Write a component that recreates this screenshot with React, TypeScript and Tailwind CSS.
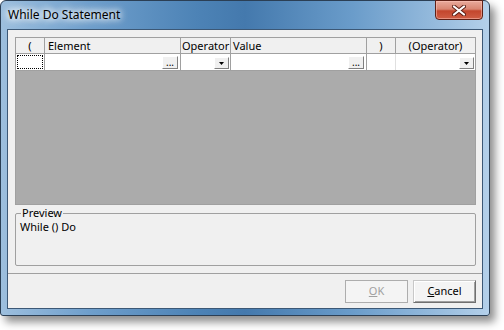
import React from "react";

const F = { fontFamily: '"Segoe UI", "Noto Sans", sans-serif' };

function DotsBtn() {
  return (
    <div className="absolute right-[2px] top-[2px] w-[16px] h-[13px] bg-[#f0f0f0] border border-[#808080] border-t-white border-l-white flex items-end justify-center text-[10px] leading-[10px] text-black pb-[1px]">
      ...
    </div>
  );
}

function DropBtn() {
  return (
    <div className="absolute right-[1px] top-[3px] w-[15px] h-[12px] bg-[#f0f0f0] border border-[#808080] border-t-white border-l-white flex items-center justify-center">
      <svg width="5" height="3" viewBox="0 0 5 3">
        <path d="M0 0h5L2.5 3z" fill="#000" />
      </svg>
    </div>
  );
}

export default function App() {
  const cols = "grid-cols-[29px_136px_50px_136px_29px_79px]";
  return (
    <div className="w-[504px] h-[330px] bg-white" style={F}>
      <div className="w-[490px] h-[316px] flex flex-col rounded-t-[6px] rounded-b-[3px] border border-[#2b3f55] shadow-[5px_6px_9px_rgba(0,0,0,0.45)] bg-[linear-gradient(90deg,#9dbfde_0%,#6f9fcc_18%,#4d83b6_40%,#4479ad_50%,#6a9cca_72%,#9dc0e0_92%,#b4d0ea_100%)]">
        <div className="h-[28px] flex items-start justify-between pl-[7px] pr-[6px] shrink-0">
          <div className="mt-[6px] text-[12px] leading-[16px] text-black [text-shadow:0_0_6px_#fff,0_0_8px_#fff,0_0_10px_#fff]">
            While Do Statement
          </div>
          <div className="-mt-[1px] w-[48px] h-[20px] rounded-b-[4px] border border-[#5f2016] bg-[linear-gradient(180deg,#e9aa9c_0%,#d98672_45%,#c3462d_55%,#cf5e45_100%)] flex items-center justify-center shadow-[inset_0_0_0_1px_rgba(255,200,190,0.5)]">
            <svg width="14" height="11" viewBox="0 0 14 11">
              <path d="M2 1.5L12 9.5M12 1.5L2 9.5" stroke="#5a1d14" strokeWidth="4" strokeLinecap="round" />
              <path d="M2 1.5L12 9.5M12 1.5L2 9.5" stroke="#fff" strokeWidth="2.2" strokeLinecap="round" />
            </svg>
          </div>
        </div>
        <div className="flex-1 mx-[6px] mb-[6px] border border-[#3c5876] bg-[#f0f0f0] flex flex-col">
          <div className="pt-[7px] pl-[7px] pr-[6px]">
            <div className="h-[168px] border border-[#a0a0a0] bg-[#ababab] flex flex-col text-[11px] leading-[15px] text-black">
              <div className={`grid ${cols} h-[16px] bg-[#f0f0f0] border-b border-[#a0a0a0]`}>
                <div className="border-r border-[#a0a0a0] text-center">(</div>
                <div className="border-r border-[#a0a0a0] pl-[3px]">Element</div>
                <div className="border-r border-[#a0a0a0] pl-[1px]">Operator</div>
                <div className="border-r border-[#a0a0a0] pl-[2px]">Value</div>
                <div className="border-r border-[#a0a0a0] text-center">)</div>
                <div className="text-center">(Operator)</div>
              </div>
              <div className={`grid ${cols} h-[17px] bg-white border-b border-[#a0a0a0]`}>
                <div className="border-r border-[#a0a0a0] p-[1px]">
                  <div className="w-full h-full border border-dotted border-black" />
                </div>
                <div className="border-r border-[#a0a0a0] relative">
                  <DotsBtn />
                </div>
                <div className="border-r border-[#a0a0a0] relative">
                  <DropBtn />
                </div>
                <div className="border-r border-[#a0a0a0] relative">
                  <DotsBtn />
                </div>
                <div className="border-r border-[#e0e0e0]" />
                <div className="relative">
                  <DropBtn />
                </div>
              </div>
            </div>
          </div>
          <div className="pl-[7px] pr-[6px] mt-[2px]">
            <fieldset className="h-[59px] border border-[#a0a0a0] px-[4px] rounded-[2px]">
              <legend className="text-[11px] leading-[12px] px-[1px] ml-[1px] text-black">Preview</legend>
              <div className="text-[11px] leading-[13px] mt-[1px] text-black">While () Do</div>
            </fieldset>
          </div>
          <div className="mt-[7px] border-t border-[#a0a0a0]" />
          <div className="flex justify-end gap-[5px] pr-[6px] pt-[6px]">
            <div className="w-[63px] h-[23px] border border-[#adadad] bg-[#f4f4f4] flex items-center justify-center text-[11px] text-[#a0a0a0]">
              <span><span className="underline">O</span>K</span>
            </div>
            <div className="w-[63px] h-[23px] border border-[#707070] border-t-[#c8c8c8] border-l-[#c8c8c8] bg-[#f4f4f4] shadow-[inset_1px_1px_0_#fff,inset_-1px_-1px_0_#a0a0a0] flex items-center justify-center text-[11px] text-black">
              <span><span className="underline">C</span>ancel</span>
            </div>
          </div>
        </div>
      </div>
    </div>
  );
}
